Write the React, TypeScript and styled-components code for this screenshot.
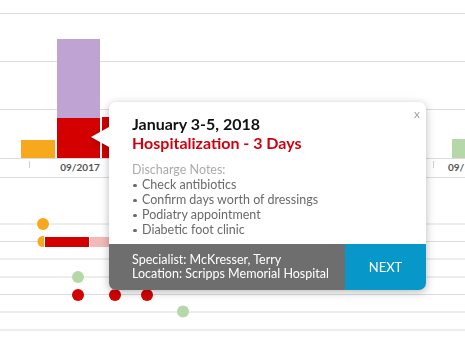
import styled, {createGlobalStyle} from 'styled-components';

const GlobalStyle = createGlobalStyle`
    html, body {
        margin: 0;
        padding: 0;
        background: #fff;
        font-family: Lato, "Open Sans", sans-serif;
    }
`;

const Page = styled.div`
    position: relative;
    width: 465px;
    height: 347px;
    overflow: hidden;
    background: #fff;
`;
const ChartPanel = styled.section`
    height: 177px;
    border-bottom: 1px solid #dcdcdc;
`;
const TimelinePanel = styled.section`
    height: 169px;
`;
const Popup = styled.div`
    position: absolute;
    left: 109px;
    top: 102px;
    width: 317px;
    height: 188px;
    display: flex;
    flex-direction: column;
    background: #fff;
    border-radius: 7px;
    filter: drop-shadow(0 2px 4px rgba(0, 0, 0, 0.28));
    &::before {
        content: "";
        position: absolute;
        left: -18px;
        top: 25px;
        border-top: 10px solid transparent;
        border-bottom: 10px solid transparent;
        border-right: 18px solid #fff;
    }
`;
const Close = styled.span`
    position: absolute;
    right: 6px;
    top: 4px;
    font-size: 12px;
    color: #a0a0a0;
    cursor: pointer;
`;
const Body = styled.div`
    flex: 1;
    padding: 12px 20px 0 23px;
`;
const Title = styled.div<{red?: boolean}>`
    font-size: 16px;
    line-height: 19px;
    font-weight: 700;
    color: ${(p) => (p.red ? '#d0010f' : '#111')};
`;
const Notes = styled.ul`
    margin: 10px 0 0;
    padding: 0;
    list-style: none;
    font-size: 12.5px;
    line-height: 15px;
    color: #6a6a6a;
`;
const NotesHead = styled.li`
    color: #aaa;
`;
const Note = styled.li`
    padding-left: 10px;
    position: relative;
    &::before {
        content: "";
        position: absolute;
        left: 1px;
        top: 6.5px;
        width: 3.5px;
        height: 3.5px;
        border-radius: 50%;
        background: #6a6a6a;
    }
`;
const Footer = styled.div`
    display: flex;
    height: 46px;
    border-radius: 0 0 7px 7px;
    overflow: hidden;
`;
const Contact = styled.div`
    flex: 1;
    display: flex;
    flex-direction: column;
    justify-content: center;
    padding-left: 23px;
    background: #6e6e6e;
    color: #fff;
    font-size: 12.5px;
    line-height: 14px;
`;
const NextButton = styled.button`
    width: 81px;
    border: 0;
    background: #0897c9;
    color: #fff;
    font-family: inherit;
    font-size: 13px;
    padding: 0;
    cursor: pointer;
`;

const GRID = '#dcdcdc';
const RED = '#d40000';
const ORANGE = '#f7a81c';
const GREEN = '#b6d7a8';

const rows = [46, 63.5, 81, 99, 116.5, 134, 152];
const dots = [
    {x: 43, y: 46, c: ORANGE},
    {x: 78, y: 99, c: GREEN},
    {x: 78, y: 117, c: RED},
    {x: 115, y: 117, c: RED},
    {x: 147, y: 117, c: RED},
    {x: 183, y: 133.5, c: GREEN},
];

function BarChart() {
    return (
        <svg width="465" height="177" viewBox="0 0 465 177">
            {[13.5, 61.5, 109.5].map((y) => (
                <line key={y} x1="0" x2="465" y1={y} y2={y} stroke={GRID} strokeWidth="1" />
            ))}
            <line x1="0" x2="465" y1="158.5" y2="158.5" stroke={GRID} strokeWidth="1" />
            <rect x="21" y="140" width="34" height="18" fill={ORANGE} />
            <rect x="57" y="39" width="43" height="79" fill="#bfa4d3" />
            <rect x="57" y="118" width="43" height="40" fill={RED} />
            <rect x="102" y="117" width="30" height="41" fill={RED} />
            <rect x="452" y="139" width="13" height="19" fill={GREEN} />
            <line x1="29.5" x2="29.5" y1="161" y2="168" stroke="#cfcfcf" />
            <line x1="433.5" x2="433.5" y1="161" y2="168" stroke="#cfcfcf" />
            <text x="80" y="171" textAnchor="middle" fontSize="10" fontWeight="700" fill="#555" fontFamily="Lato">09/2017</text>
            <text x="448" y="171" fontSize="10" fontWeight="700" fill="#555" fontFamily="Lato">09/</text>
        </svg>
    );
}

function Timeline() {
    return (
        <svg width="465" height="169" viewBox="0 0 465 169">
            {rows.map((y) => (
                <line key={y} x1="0" x2="465" y1={y} y2={y} stroke={GRID} strokeWidth="1" />
            ))}
            <circle cx="43" cy="63.5" r="5.5" fill={ORANGE} />
            <rect x="44" y="58.5" width="2" height="11" fill="#fff" />
            <rect x="45" y="59" width="44" height="10" fill={RED} />
            <rect x="90" y="59" width="40" height="10" fill="#f4b9b9" />
            {dots.map((d, i) => (
                <circle key={i} cx={d.x} cy={d.y} r="6" fill={d.c} />
            ))}
        </svg>
    );
}

export default function App() {
    return (
        <>
            <GlobalStyle />
            <Page>
                <ChartPanel>
                    <BarChart />
                </ChartPanel>
                <TimelinePanel>
                    <Timeline />
                </TimelinePanel>
                <Popup>
                    <Close>x</Close>
                    <Body>
                        <Title>January 3-5, 2018</Title>
                        <Title red>Hospitalization - 3 Days</Title>
                        <Notes>
                            <NotesHead>Discharge Notes:</NotesHead>
                            <Note>Check antibiotics</Note>
                            <Note>Confirm days worth of dressings</Note>
                            <Note>Podiatry appointment</Note>
                            <Note>Diabetic foot clinic</Note>
                        </Notes>
                    </Body>
                    <Footer>
                        <Contact>
                            <span>Specialist: McKresser, Terry</span>
                            <span>Location: Scripps Memorial Hospital</span>
                        </Contact>
                        <NextButton>NEXT</NextButton>
                    </Footer>
                </Popup>
            </Page>
        </>
    );
}
